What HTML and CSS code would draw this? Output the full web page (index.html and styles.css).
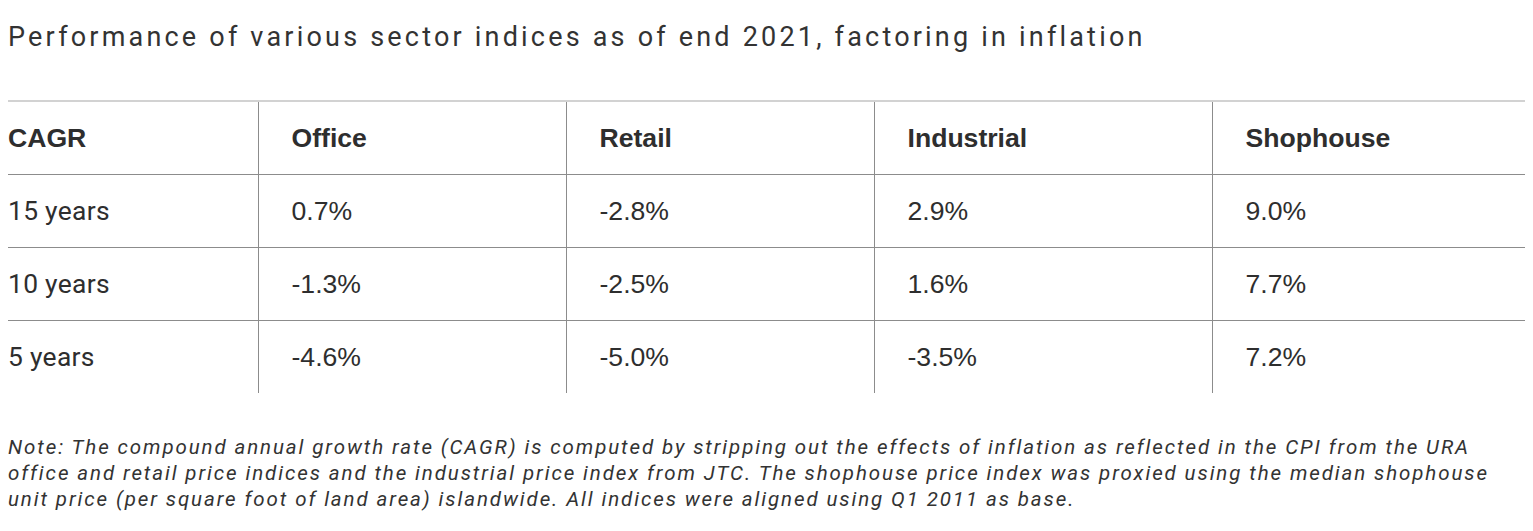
FILE: index.html
```html
<!DOCTYPE html>
<html lang="en">
<head>
<meta charset="utf-8">
<title>Sector indices performance</title>
<link rel="stylesheet" href="styles.css">
</head>
<body>
<div class="page">
  <h2 class="title">Performance of various sector indices as of end 2021, factoring in inflation</h2>
  <table class="data">
    <colgroup>
      <col class="c1"><col class="c2"><col class="c3"><col class="c4"><col class="c5">
    </colgroup>
    <thead>
      <tr>
        <th>CAGR</th><th>Office</th><th>Retail</th><th>Industrial</th><th>Shophouse</th>
      </tr>
    </thead>
    <tbody>
      <tr><td class="label">15 years</td><td>0.7%</td><td>-2.8%</td><td>2.9%</td><td>9.0%</td></tr>
      <tr><td class="label">10 years</td><td>-1.3%</td><td>-2.5%</td><td>1.6%</td><td>7.7%</td></tr>
      <tr><td class="label">5 years</td><td>-4.6%</td><td>-5.0%</td><td>-3.5%</td><td>7.2%</td></tr>
    </tbody>
  </table>
  <p class="note">Note: The compound annual growth rate (CAGR) is computed by stripping out the effects of inflation as reflected in the CPI from the URA office and retail price indices and the industrial price index from JTC. The shophouse price index was proxied using the median shophouse unit price (per square foot of land area) islandwide. All indices were aligned using Q1 2011 as base.</p>
</div>
</body>
</html>
```

FILE: styles.css
```css
html, body {
  margin: 0;
  padding: 0;
  background: #ffffff;
}

.page {
  padding: 0 8px;
  color: #2e2e2e;
}

.title {
  margin: 22px 0 48px;
  font-family: Roboto, "Liberation Sans", sans-serif;
  font-weight: 400;
  font-size: 27px;
  letter-spacing: 3.2px;
  line-height: 30px;
  color: #333333;
}

.data {
  width: 100%;
  border-collapse: collapse;
  table-layout: fixed;
  border-top: 2px solid #d2d2d2;
}

.c1 { width: 250px; }
.c2 { width: 308px; }
.c3 { width: 308px; }
.c4 { width: 338px; }
.c5 { width: auto; }

.data th,
.data td {
  text-align: left;
  padding: 18px 32px 18px 33px;
  line-height: 36px;
  vertical-align: middle;
  border-left: 1px solid #8c8c8c;
  color: #2e2e2e;
}

.data th:first-child,
.data td:first-child {
  border-left: none;
  padding-left: 0;
}

.data th {
  font-family: "Liberation Sans", Arial, sans-serif;
  font-weight: 700;
  font-size: 26.6px;
}

.data td {
  font-family: "Liberation Sans", Arial, sans-serif;
  font-size: 26.6px;
}

.data td.label {
  font-family: Roboto, "Liberation Sans", sans-serif;
  font-size: 26.4px;
  letter-spacing: 0.3px;
}

.data tbody tr {
  border-top: 1px solid #8c8c8c;
}

.note {
  margin: 41px 0 0;
  font-family: Roboto, "Liberation Sans", sans-serif;
  font-style: italic;
  font-size: 20.5px;
  letter-spacing: 1.9px;
  line-height: 26px;
  color: #333333;
}
```
